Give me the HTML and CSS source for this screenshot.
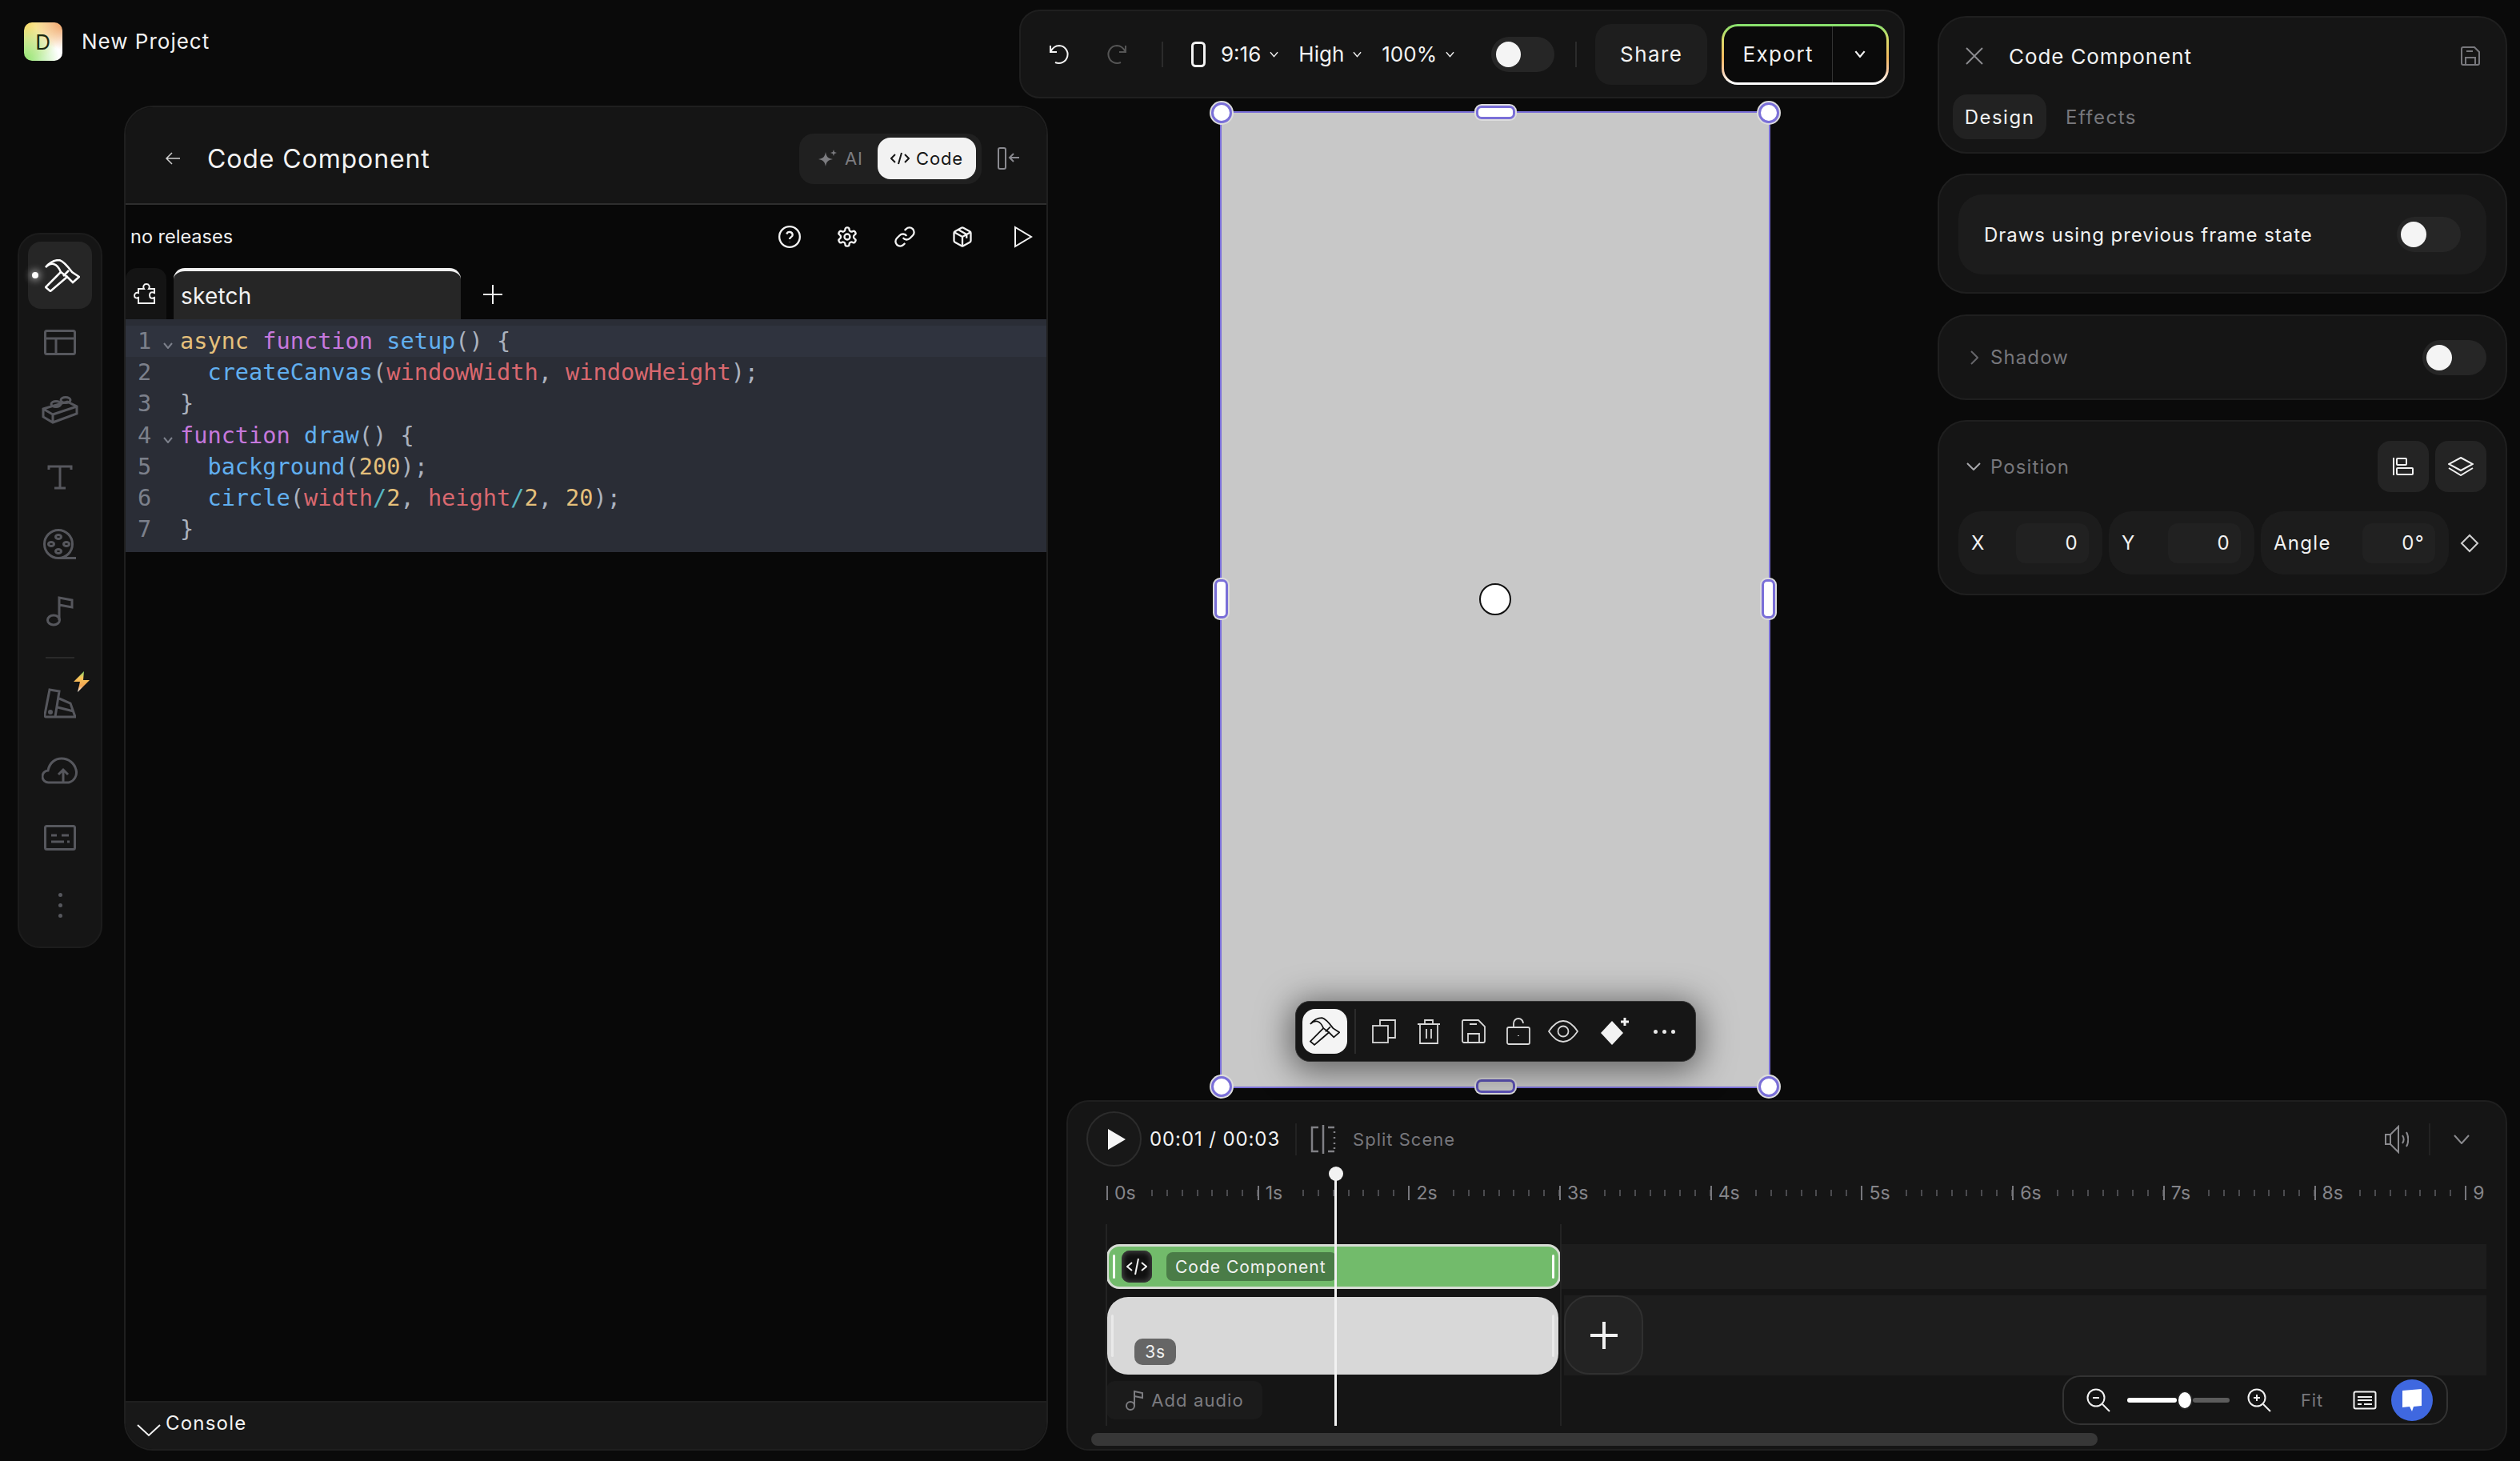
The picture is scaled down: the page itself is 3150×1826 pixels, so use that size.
FILE: index.html
```html
<!DOCTYPE html>
<html lang="en">
<head>
  <meta charset="UTF-8" />
  <title>New Project</title>
  <link rel="stylesheet" href="styles.css">
</head>
<body>
<svg class="sprite" width="0" height="0">
  <symbol id="hammer" viewBox="0 0 44 41">
    <path d="M1 10C6 4 12 1 18 1c5 1 10 7 16 15l9 6-8 7-7-7-7 6L7 40 1 35l16-16 3-3c-2-5-5-9-9-10-4-1-7 1-10 4z"/>
    <path d="M20 16l8 6M30 14l-7 7"/>
  </symbol>
  <symbol id="chev" viewBox="0 0 12 8"><path d="M1 1l5 6 5-6"/></symbol>
</svg>

<div class="app">

  <!-- Project name -->
  <div class="project">
    <div class="logo">D</div>
    <span class="project-name">New Project</span>
  </div>

  <!-- Top toolbar -->
  <div class="toolbar">
    <svg class="ico undo" width="30" height="30" viewBox="0 0 30 30"><path d="M4 4v8h8M4 12C7 6 11 4 15 4a11 11 0 1 1-5 21"/></svg>
    <svg class="ico redo" width="30" height="30" viewBox="0 0 30 30"><path d="M26 4v8h-8M26 12C23 6 19 4 15 4a11 11 0 1 0 5 21"/></svg>
    <span class="vline tb-first"></span>
    <svg class="ico phone" width="18" height="32" viewBox="0 0 18 32"><rect x="1.5" y="1.5" width="15" height="29" rx="4"/></svg>
    <span class="tb-select tb-ratio">9:16<svg class="ico" width="12" height="8"><use href="#chev"/></svg></span>
    <span class="tb-select">High<svg class="ico" width="12" height="8"><use href="#chev"/></svg></span>
    <span class="tb-select">100%<svg class="ico" width="12" height="8"><use href="#chev"/></svg></span>
    <span class="switch tb-switch"><span class="knob"></span></span>
    <span class="vline tb-second"></span>
    <button class="share">Share</button>
    <div class="export">
      <span class="export-label">Export</span>
      <span class="export-more"><svg class="ico" width="14" height="9"><use href="#chev"/></svg></span>
    </div>
  </div>

  <!-- Left tool rail -->
  <nav class="rail">
    <div class="rail-item active">
      <span class="rail-dot"></span>
      <svg class="ico rail-hammer" width="44" height="41"><use href="#hammer"/></svg>
    </div>
    <div class="rail-item"><svg class="ico" width="40" height="32" viewBox="0 0 40 32"><rect x="1.5" y="1.5" width="37" height="29" rx="2"/><path d="M1.5 11h37M15 11v19"/></svg></div>
    <div class="rail-item"><svg class="ico" width="46" height="36" viewBox="0 0 46 36"><path d="M2 17l30-9 12 6v9L14 34 2 27zM2 17l12 7v10M14 24l30-10"/><ellipse cx="18" cy="11" rx="6" ry="3.5"/><ellipse cx="30" cy="6" rx="6" ry="3.5"/></svg></div>
    <div class="rail-item"><svg class="ico" width="32" height="32" viewBox="0 0 32 32"><path d="M2 7V3h28v4M16 3v27M9 30h14"/></svg></div>
    <div class="rail-item"><svg class="ico" width="42" height="38" viewBox="0 0 42 38"><circle cx="19" cy="19" r="17.5"/><ellipse cx="19" cy="10" rx="3.5" ry="2.5"/><ellipse cx="19" cy="28" rx="3.5" ry="2.5"/><ellipse cx="10" cy="19" rx="3.5" ry="2.5"/><ellipse cx="29" cy="19" rx="3.5" ry="2.5"/><path d="M19 36.5h22"/></svg></div>
    <div class="rail-item"><svg class="ico" width="34" height="38" viewBox="0 0 34 38"><ellipse cx="9" cy="30" rx="7.5" ry="6"/><path d="M16 30V2l16 3v9l-16-3"/></svg></div>
    <div class="rail-sep"></div>
    <div class="rail-item">
      <svg class="ico" width="40" height="39" viewBox="0 0 40 39"><path d="M7 2l12 2-5 32H3a2 2 0 0 1-2-3zM19 13l14 6 6 17H14M17 24l20 5"/><circle cx="8" cy="30" r="1.5"/></svg>
      <svg class="bolt" width="20" height="26" viewBox="0 0 20 26"><defs><linearGradient id="boltfill" x1="0" y1="0" x2="0" y2="1"><stop offset="0" stop-color="#7fd66a"/><stop offset=".3" stop-color="#f7c65a"/><stop offset=".7" stop-color="#f3a452"/><stop offset="1" stop-color="#fff"/></linearGradient></defs><path d="M13 0L0 13h8l-3 13 15-15h-8z" fill="url(#boltfill)"/></svg>
    </div>
    <div class="rail-item"><svg class="ico" width="46" height="34" viewBox="0 0 46 34"><path d="M14 32H9a7.500 7.500 0 0 1-1-15C10 7 17 2 25 2c9 0 16 6 18 14 2 7-2 14-9 16h-3M12 32h22"/><path d="M27 32V17M21 22l6-6 6 6"/></svg></div>
    <div class="rail-item"><svg class="ico" width="40" height="32" viewBox="0 0 40 32"><rect x="1.500" y="1.500" width="37" height="29" rx="2"/><path d="M9 13h7M22 13h9M9 21h16M29 21h3"/></svg></div>
    <div class="rail-more"><i></i><i></i><i></i></div>
  </nav>

  <!-- Code editor panel -->
  <section class="code-panel">
    <header class="code-head">
      <svg class="ico back" width="20" height="18" viewBox="0 0 20 18"><path d="M19 9H2M9 2L2 9l7 7"/></svg>
      <h1 class="code-title">Code Component</h1>
      <div class="seg">
        <span class="seg-ai"><svg width="26" height="24" viewBox="0 0 26 24"><path class="seg-star" d="M11 4c1 6 3 8 9 9-6 1-8 3-9 9-1-6-3-8-9-9 6-1 8-3 9-9zM21 1l1 3 3 1-3 1-1 3-1-3-3-1 3-1z"/></svg>AI</span>
        <span class="seg-code"><svg class="ico" width="24" height="16" viewBox="0 0 24 16"><path d="M6 3L1 8l5 5M18 3l5 5-5 5M14 1l-4 14"/></svg>Code</span>
      </div>
      <svg class="ico collapse" width="28" height="28" viewBox="0 0 28 28"><rect x="1" y="1" width="9" height="26" rx="2"/><path d="M27 13H15M20 8l-5 5 5 5"/></svg>
    </header>
    <div class="release-bar">
      <span class="release-text">no releases</span>
      <div class="release-icons">
        <svg class="ico" width="28" height="28" viewBox="0 0 24 24"><circle cx="12" cy="12" r="11"/><path d="M8.800 9a3.300 3.300 0 0 1 6.400 1c0 2.200-3.200 2.500-3.200 4.500M12 17.800v.2"/></svg>
        <svg class="ico" width="28" height="28" viewBox="0 0 24 24"><path d="M12.220 2h-.44a2 2 0 0 0-2 2v.18a2 2 0 0 1-1 1.730l-.43.25a2 2 0 0 1-2 0l-.15-.08a2 2 0 0 0-2.730.73l-.22.38a2 2 0 0 0 .73 2.730l.15.1a2 2 0 0 1 1 1.720v.51a2 2 0 0 1-1 1.740l-.15.09a2 2 0 0 0-.73 2.730l.22.38a2 2 0 0 0 2.730.73l.15-.08a2 2 0 0 1 2 0l.43.25a2 2 0 0 1 1 1.730V20a2 2 0 0 0 2 2h.44a2 2 0 0 0 2-2v-.18a2 2 0 0 1 1-1.730l.43-.25a2 2 0 0 1 2 0l.15.08a2 2 0 0 0 2.730-.73l.22-.39a2 2 0 0 0-.73-2.730l-.15-.08a2 2 0 0 1-1-1.740v-.5a2 2 0 0 1 1-1.740l.15-.09a2 2 0 0 0 .73-2.730l-.22-.38a2 2 0 0 0-2.730-.73l-.15.08a2 2 0 0 1-2 0l-.43-.25a2 2 0 0 1-1-1.730V4a2 2 0 0 0-2-2z"/><circle cx="12" cy="12" r="3"/></svg>
        <svg class="ico" width="28" height="28" viewBox="0 0 24 24"><path d="M10 13a5 5 0 0 0 7.540.54l3-3a5 5 0 0 0-7.070-7.070l-1.720 1.710"/><path d="M14 11a5 5 0 0 0-7.540-.54l-3 3a5 5 0 0 0 7.070 7.070l1.710-1.710"/></svg>
        <svg class="ico" width="28" height="28" viewBox="0 0 24 24"><path d="M21 8a2 2 0 0 0-1-1.730l-7-4a2 2 0 0 0-2 0l-7 4A2 2 0 0 0 3 8v8a2 2 0 0 0 1 1.730l7 4a2 2 0 0 0 2 0l7-4A2 2 0 0 0 21 16Z"/><path d="M3.300 7l8.700 5 8.700-5M12 22V12M7.500 4.270l9 5.150v4"/></svg>
        <svg class="ico run" width="28" height="28" viewBox="-2 0 28 28"><path d="M2 2l20 12L2 26z"/></svg>
      </div>
    </div>
    <div class="tabs">
      <span class="tab-plugin"><svg class="ico" width="28" height="26" viewBox="0 0 28 26"><path d="M6 25h20v-7c-4 2-6 0-6-3s2-5 6-3V7h-7c2-3 0-6-3-6s-5 3-3 6H6v5c-3-1-5 1-5 3.500S3 19 6 18z"/></svg></span>
      <span class="tab-active">sketch</span>
      <svg class="ico tab-add" width="26" height="26" viewBox="0 0 26 26"><path d="M13 1v24M1 13h24"/></svg>
    </div>
    <div class="editor">
      <div class="line current"><span class="ln">1</span><span class="fold"><svg class="ico" width="12" height="8"><use href="#chev"/></svg></span><span class="c-y">async</span> <span class="c-k">function</span> <span class="c-f">setup</span><span class="c-p">() {</span></div>
      <div class="line"><span class="ln">2</span><span class="fold"></span>  <span class="c-f">createCanvas</span><span class="c-p">(</span><span class="c-v">windowWidth</span><span class="c-p">,</span> <span class="c-v">windowHeight</span><span class="c-p">);</span></div>
      <div class="line"><span class="ln">3</span><span class="fold"></span><span class="c-p">}</span></div>
      <div class="line"><span class="ln">4</span><span class="fold"><svg class="ico" width="12" height="8"><use href="#chev"/></svg></span><span class="c-k">function</span> <span class="c-f">draw</span><span class="c-p">() {</span></div>
      <div class="line"><span class="ln">5</span><span class="fold"></span>  <span class="c-f">background</span><span class="c-p">(</span><span class="c-y">200</span><span class="c-p">);</span></div>
      <div class="line"><span class="ln">6</span><span class="fold"></span>  <span class="c-f">circle</span><span class="c-p">(</span><span class="c-v">width</span><span class="c-o">/</span><span class="c-y">2</span><span class="c-p">,</span> <span class="c-v">height</span><span class="c-o">/</span><span class="c-y">2</span><span class="c-p">,</span> <span class="c-y">20</span><span class="c-p">);</span></div>
      <div class="line"><span class="ln">7</span><span class="fold"></span><span class="c-p">}</span></div>
    </div>
    <div class="code-body"></div>
    <footer class="console">
      <svg class="ico" width="30" height="17" viewBox="0 0 30 17"><path d="M1 2l14 13L29 2"/></svg>
      <span>Console</span>
    </footer>
  </section>

  <!-- Canvas -->
  <main class="stage">
    <div class="canvas">
      <span class="h-corner tl"></span><span class="h-corner tr"></span>
      <span class="h-corner bl"></span><span class="h-corner br"></span>
      <span class="h-bar top"></span><span class="h-bar bottom"></span>
      <span class="h-side left"></span><span class="h-side right"></span>
      <span class="sketch-circle"></span>
      <div class="mini-bar">
        <span class="mini-active"><svg class="ico" width="38" height="36"><use href="#hammer"/></svg></span>
        <span class="mini-sep"></span>
        <svg class="ico" width="30" height="30" viewBox="0 0 30 30"><path d="M10 8V1h19v22h-9"/><rect x="1" y="8" width="19" height="21"/></svg>
        <svg class="ico" width="30" height="32" viewBox="0 0 30 32"><path d="M1 7h28M4 7v24h22V7M10 7V2h10v5M12 13v12M18 13v12"/></svg>
        <svg class="ico" width="30" height="30" viewBox="0 0 30 30"><path d="M2 1h19l8 8v18a2 2 0 0 1-2 2H3a2 2 0 0 1-2-2V2zM8 29V18h14v11M10 6h9"/></svg>
        <svg class="ico" width="30" height="34" viewBox="0 0 30 34"><rect x="1" y="12" width="28" height="21" rx="2"/><path d="M9 12V7a6 6 0 0 1 12 0M15 22v1"/></svg>
        <svg class="ico mini-eye" width="38" height="28" viewBox="0 0 38 28"><path d="M1 14C7 5 13 1 19 1s12 4 18 13c-6 9-12 13-18 13S7 23 1 14z"/><circle cx="19" cy="14" r="6.500"/></svg>
        <svg class="mini-spark" width="36" height="34" viewBox="0 0 36 34"><path d="M14 4l14 15-14 15L0 19z"/><path d="M30 0v10M25 5h10" class="mini-plus"/></svg>
        <span class="mini-dots"><i></i><i></i><i></i></span>
      </div>
    </div>
  </main>

  <!-- Right properties -->
  <aside class="props">
    <section class="card card-title">
      <div class="title-row">
        <svg class="ico close" width="24" height="24" viewBox="0 0 24 24"><path d="M2 2l20 20M22 2L2 22"/></svg>
        <span class="title-text">Code Component</span>
        <svg class="ico save" width="24" height="24" viewBox="0 0 24 24"><path d="M3 1h14l6 6v14a2 2 0 0 1-2 2H3a2 2 0 0 1-2-2V3a2 2 0 0 1 2-2zM6 23v-9h12v9M7 6h8"/></svg>
      </div>
      <div class="prop-tabs">
        <span class="prop-tab on">Design</span>
        <span class="prop-tab">Effects</span>
      </div>
    </section>
    <section class="card card-draws">
      <div class="draws-row">
        <span>Draws using previous frame state</span>
        <span class="switch small"><span class="knob"></span></span>
      </div>
    </section>
    <section class="card card-shadow">
      <svg class="ico chev-r" width="10" height="18" viewBox="0 0 10 18"><path d="M1 1l8 8-8 8"/></svg>
      <span class="card-label">Shadow</span>
      <span class="switch small"><span class="knob"></span></span>
    </section>
    <section class="card card-position">
      <div class="pos-head">
        <svg class="ico chev-d" width="18" height="10" viewBox="0 0 18 10"><path d="M1 1l8 8 8-8"/></svg>
        <span class="card-label">Position</span>
        <span class="square-btn pos-first"><svg class="ico" width="26" height="24" viewBox="0 0 26 24"><path d="M1 1v22"/><rect x="5" y="2" width="12" height="8" rx="1"/><rect x="5" y="14" width="20" height="8" rx="1"/></svg></span>
        <span class="square-btn"><svg class="ico" width="32" height="24" viewBox="0 0 32 24"><path d="M16 1l15 8-15 8L1 9z"/><path d="M1 14l15 9 15-9"/></svg></span>
      </div>
      <div class="pos-fields">
        <div class="field f-x"><span>X</span><span class="field-val">0</span></div>
        <div class="field f-y"><span>Y</span><span class="field-val">0</span></div>
        <div class="field f-angle"><span>Angle</span><span class="field-val">0°</span></div>
        <svg class="ico keyframe" width="24" height="24" viewBox="0 0 24 24"><path d="M12 2l10 10-10 10L2 12z"/></svg>
      </div>
    </section>
  </aside>

  <!-- Timeline -->
  <section class="timeline">
    <div class="tl-head">
      <button class="tl-play"><svg width="24" height="28" viewBox="0 0 24 28"><path d="M1 1l22 13L1 27z"/></svg></button>
      <span class="tl-time">00:01 / 00:03</span>
      <span class="vline tl-sep"></span>
      <svg class="ico tl-split" width="32" height="36" viewBox="0 0 32 36"><path d="M10 3H2v30h8M16 0v36M22 3h8M22 33h8M30 8v2M30 15v2M30 22v2M30 28v2"/></svg>
      <span class="tl-split-text">Split Scene</span>
      <svg class="ico tl-vol" width="30" height="36" viewBox="0 0 30 36"><path d="M1 12v12h6l10 10V2L7 12zM7 12v12M22 13c2 3 2 7 0 10M27 9c3 5 3 13 0 18"/></svg>
      <span class="vline tl-sep2"></span>
      <svg class="ico tl-chev" width="20" height="12" viewBox="0 0 20 12"><path d="M1 1l9 10 9-10"/></svg>
    </div>
    <div class="ruler">
      <div class="sec"><span>0s</span><i></i></div>
      <div class="sec"><span>1s</span><i></i></div>
      <div class="sec"><span>2s</span><i></i></div>
      <div class="sec"><span>3s</span><i></i></div>
      <div class="sec"><span>4s</span><i></i></div>
      <div class="sec"><span>5s</span><i></i></div>
      <div class="sec"><span>6s</span><i></i></div>
      <div class="sec"><span>7s</span><i></i></div>
      <div class="sec"><span>8s</span><i></i></div>
      <div class="sec"><span>9</span></div>
    </div>
    <div class="tracks">
      <div class="track track-fx">
        <div class="clip-fx">
          <span class="grip"></span>
          <span class="clip-icon"><svg class="ico" width="26" height="22" viewBox="0 0 26 22"><path d="M7 6l-6 5 6 5M19 6l6 5-6 5M15 1l-4 20"/></svg></span>
          <span class="clip-name">Code Component</span>
          <span class="grip end"></span>
        </div>
        <div class="track-rest"></div>
      </div>
      <div class="track track-scene">
        <div class="clip-scene">
          <span class="grip pale"></span>
          <span class="clip-dur">3s</span>
          <span class="grip pale end"></span>
        </div>
        <button class="add-scene"><svg class="ico" width="38" height="38" viewBox="0 0 38 38"><path d="M19 2v34M2 19h34"/></svg></button>
        <div class="track-rest"></div>
      </div>
    </div>
    <div class="tl-foot">
      <button class="add-audio"><svg class="ico" width="24" height="26" viewBox="0 0 24 26"><ellipse cx="7" cy="20" rx="5" ry="5"/><path d="M12 20V2l10 2v6l-10-2"/></svg>Add audio</button>
      <div class="zoom-bar">
        <svg class="ico" width="30" height="30" viewBox="0 0 30 30"><circle cx="12" cy="12" r="10.500"/><path d="M20 20l9 9M8 12h8"/></svg>
        <div class="zoom-slider"><span class="zoom-fill"></span><span class="zoom-knob"></span><span class="zoom-rest"></span></div>
        <svg class="ico" width="30" height="30" viewBox="0 0 30 30"><circle cx="12" cy="12" r="10.500"/><path d="M20 20l9 9M8 12h8M12 8v8"/></svg>
        <span class="zoom-fit">Fit</span>
        <svg class="ico zoom-cap" width="30" height="24" viewBox="0 0 30 24"><rect x="1.500" y="1.500" width="27" height="21" rx="2"/><path d="M6 8h18M6 12h18M6 17h5M14 17h10"/></svg>
        <span class="chat-btn"><svg width="28" height="30" viewBox="0 0 28 30"><path d="M2 3l24-2v21l-10 1-2 6-3-6-9 1z"/></svg></span>
      </div>
    </div>
    <div class="tl-scroll"></div>
    <span class="guide g0"></span>
    <span class="guide g3"></span>
    <span class="playhead"></span>
  </section>

</div>
</body>
</html>
```

FILE: styles.css
```css
* {
  box-sizing: border-box;
}

body {
  margin: 0;
  width: 3150px;
  height: 1826px;
  overflow: hidden;
  background-color: #0a0a0a;
  color: #f2f2f2;
  font-family: Inter, 'Noto Sans', sans-serif;
  font-size: 26px;
  letter-spacing: 0.8px;
}

button {
  font: inherit;
  color: inherit;
  letter-spacing: inherit;
  border: none;
  padding: 0;
}

.sprite {
  position: absolute;
}

.ico {
  fill: none;
  stroke: currentColor;
  stroke-width: 2;
  flex: none;
}

.vline {
  width: 2px;
  background-color: #2b2b2b;
  flex: none;
}

.app {
  display: grid;
  grid-template-columns: 155px 1119px 59px 1048px 41px 728px;
  grid-template-rows: 132px 1243px 451px;
  height: 1826px;
}

/* project */
.project {
  grid-column: 1 / 3;
  grid-row: 1;
  display: flex;
  align-items: flex-start;
  padding: 28px 0 0 30px;
  gap: 24px;
}

.logo {
  width: 48px;
  height: 48px;
  border-radius: 10px;
  display: flex;
  align-items: center;
  justify-content: center;
  color: #1c2a10;
  font-size: 26px;
  background:
    radial-gradient(circle at 100% 0, #ef9f5f, transparent 50%),
    radial-gradient(circle at 0 100%, #8fe36a, transparent 65%),
    radial-gradient(circle at 0 0, #f6d85f, transparent 75%),
    #fff;
}

.project-name {
  font-size: 26px;
  line-height: 48px;
  letter-spacing: 1px;
}

/* toolbar */
.toolbar {
  grid-column: 3 / 5;
  grid-row: 1;
  margin-top: 12px;
  height: 111px;
  width: 1107px;
  background-color: #151515;
  border: 2px solid #1f1f1f;
  border-radius: 26px;
  display: flex;
  align-items: center;
  padding-left: 33px;
  z-index: 2;
}

.undo {
  color: #f2f2f2;
}

.redo {
  color: #555;
  margin-left: 42px;
}

.toolbar .vline {
  height: 32px;
}

.tb-first {
  margin-left: 41px;
}

.phone {
  margin-left: 35px;
  stroke-width: 3;
}

.tb-select {
  display: flex;
  align-items: center;
  gap: 11px;
  margin-left: 25px;
  font-size: 26px;
  letter-spacing: 0;
}

.tb-select .ico {
  width: 11px;
  stroke-width: 1.5;
}

.tb-ratio {
  margin-left: 19px;
}

.switch {
  display: flex;
  align-items: center;
  background-color: #262626;
  border-radius: 22px;
  flex: none;
}

.knob {
  border-radius: 50%;
  background-color: #f4f4f4;
}

.tb-switch {
  width: 79px;
  height: 44px;
  margin-left: 46px;
  padding-left: 6px;
}

.tb-switch .knob {
  width: 31px;
  height: 32px;
}

.tb-second {
  margin-left: 26px;
}

.share {
  margin-left: 23px;
  width: 140px;
  height: 76px;
  border-radius: 20px;
  background-color: #1e1e1e;
  font-size: 26px;
  letter-spacing: 1.400px;
}

.export {
  margin-left: 18px;
  width: 209px;
  height: 76px;
  border: 3px solid transparent;
  border-radius: 20px;
  background:
    linear-gradient(#0a0a0a, #0a0a0a) padding-box,
    linear-gradient(180deg, #84e16e, #d9dc6a 25%, #f4bb5f 55%, #f8c79c 75%, #fff 97%) border-box;
  display: flex;
  align-items: stretch;
}

.export-label {
  width: 136px;
  display: flex;
  align-items: center;
  justify-content: center;
  border-right: 1px solid #333;
  letter-spacing: 1.400px;
}

.export-more {
  flex: 1;
  display: flex;
  align-items: center;
  justify-content: center;
}

/* left rail */
.rail {
  grid-column: 1;
  grid-row: 2 / 4;
  margin: 159px 0 0 22px;
  width: 106px;
  height: 894px;
  background-color: #151515;
  border: 2px solid #1c1c1c;
  border-radius: 28px;
  padding-top: 9px;
  display: flex;
  flex-direction: column;
  align-items: center;
  color: #56575d;
}

.rail .ico {
  stroke-width: 3;
}

.rail-item {
  position: relative;
  height: 84px;
  width: 80px;
  display: flex;
  align-items: center;
  justify-content: center;
  flex: none;
}

.rail-item.active {
  background-color: #262626;
  border-radius: 16px;
  color: #fff;
}

.rail-item.active .ico {
  stroke-width: 2.500;
}

.rail-hammer {
  margin-left: 5px;
}

.rail-dot {
  position: absolute;
  left: 5px;
  top: 38px;
  width: 8px;
  height: 8px;
  border-radius: 50%;
  background-color: #fff;
  box-shadow: 0 0 8px 3px rgba(255, 255, 255, 0.45);
}

.rail-sep {
  width: 36px;
  height: 2px;
  background-color: #2a2a2a;
  margin: 15px 0 14px;
  flex: none;
}

.bolt {
  position: absolute;
  right: 3px;
  top: 2px;
}

.rail-more {
  margin-top: 27px;
  display: flex;
  flex-direction: column;
  gap: 8px;
}

.rail-more i {
  width: 5px;
  height: 5px;
  border-radius: 50%;
  background-color: #56575d;
}

/* code panel */
.code-panel {
  grid-column: 2 / 4;
  grid-row: 2 / 4;
  width: 1155px;
  height: 1681px;
  border: 2px solid #1f1f1f;
  border-radius: 36px;
  overflow: hidden;
  background-color: #080808;
  display: flex;
  flex-direction: column;
}

.code-head {
  height: 122px;
  flex: none;
  background-color: #151515;
  border-bottom: 2px solid #2e2e2e;
  display: flex;
  align-items: center;
  padding: 8px 0 0 49px;
}

.back {
  color: #cfcfcf;
  stroke-width: 1.500;
}

.code-title {
  margin: 0 0 0 33px;
  font-size: 32px;
  font-weight: 400;
  letter-spacing: 0.900px;
  flex: 1;
}

.seg {
  width: 228px;
  height: 63px;
  background-color: #202020;
  border-radius: 18px;
  display: flex;
  align-items: center;
  padding-left: 22px;
  font-size: 22px;
}

.seg-ai {
  display: flex;
  align-items: center;
  gap: 9px;
  color: #7c7c80;
  width: 76px;
}

.seg-star {
  fill: #7c7c80;
}

.seg-code {
  width: 123px;
  height: 52px;
  background-color: #f2f2f2;
  color: #161616;
  border-radius: 16px;
  display: flex;
  align-items: center;
  justify-content: center;
  gap: 8px;
}

.collapse {
  color: #8a8a90;
  margin: 0 33px 0 20px;
}

.release-bar {
  height: 79px;
  flex: none;
  display: flex;
  align-items: center;
  justify-content: space-between;
  padding: 0 15px 0 6px;
}

.release-text {
  font-size: 23.500px;
  letter-spacing: 0;
}

.release-icons {
  display: flex;
  gap: 44px;
}

.run {
  margin-left: 4px;
}

.tabs {
  height: 64px;
  flex: none;
  display: flex;
  gap: 9px;
  align-items: flex-end;
}

.tab-plugin {
  width: 51px;
  height: 64px;
  background-color: #141414;
  border-radius: 14px 14px 0 0;
  display: flex;
  align-items: center;
  justify-content: center;
  padding-right: 4px;
}

.tab-active {
  width: 359px;
  height: 64px;
  background-color: #262626;
  border-top: 4px solid #f0f0f0;
  border-radius: 14px 14px 0 0;
  padding: 14px 0 0 9px;
  font-size: 28px;
  letter-spacing: 0.200px;
}

.tab-add {
  align-self: center;
  margin: 2px 0 0 18px;
}

.editor {
  height: 291px;
  flex: none;
  background-color: #2a2d36;
  padding-top: 8px;
  font-family: 'DejaVu Sans Mono', monospace;
  font-size: 28.600px;
  letter-spacing: 0;
}

.line {
  height: 39.200px;
  line-height: 39.200px;
  white-space: pre;
}

.line.current {
  background-color: #2f333e;
}

.ln {
  display: inline-block;
  width: 47px;
  padding-left: 15px;
  color: #7c808b;
}

.fold {
  display: inline-block;
  width: 21px;
  color: #7c808b;
}

.c-y { color: #e5c07b; }
.c-k { color: #c678dd; }
.c-f { color: #61afef; }
.c-v { color: #d9686f; }
.c-p { color: #abb2bf; }
.c-o { color: #56b6c2; }

.code-body {
  flex: 1;
}

.console {
  height: 60px;
  flex: none;
  background-color: #181818;
  border-top: 2px solid #1f1f1f;
  display: flex;
  align-items: center;
  padding: 0 0 8px 14px;
  gap: 6px;
  font-size: 24px;
  letter-spacing: 1.200px;
}

.console .ico {
  margin-top: 18px;
}

/* canvas */
.stage {
  grid-column: 4;
  grid-row: 2;
  padding: 9px 0 0 194px;
}

.canvas {
  position: relative;
  width: 684px;
  height: 1217px;
  background-color: #c8c8c8;
  box-shadow: 0 0 0 2px #7a6fd8;
}

.h-corner {
  position: absolute;
  width: 26px;
  height: 26px;
  background-color: #fff;
  border: 3px solid #7a6fd8;
  border-radius: 50%;
  box-shadow: 0 0 0 2px #ddd;
}

.tl { left: -13px; top: -13px; }
.tr { right: -13px; top: -13px; }
.bl { left: -13px; bottom: -13px; }
.br { right: -13px; bottom: -13px; }

.h-bar {
  position: absolute;
  left: 318px;
  width: 49px;
  height: 17px;
  background-color: #fff;
  border: 3px solid #7a6fd8;
  border-radius: 7px;
  box-shadow: 0 0 0 2px #ddd;
}

.h-bar.top { top: -9px; }
.h-bar.bottom { bottom: -8px; background-color: #c8c8c8; border-color: #5e54b8; }

.h-side {
  position: absolute;
  top: 583px;
  width: 17px;
  height: 49px;
  background-color: #fff;
  border: 3px solid #7a6fd8;
  border-radius: 7px;
  box-shadow: 0 0 0 2px #ddd;
}

.h-side.left { left: -9px; }
.h-side.right { right: -8px; }

.sketch-circle {
  position: absolute;
  left: 322px;
  top: 588px;
  width: 40px;
  height: 40px;
  border-radius: 50%;
  background-color: #fff;
  border: 2px solid #111;
}

.mini-bar {
  position: absolute;
  left: 92px;
  top: 1110px;
  width: 501px;
  height: 76px;
  background-color: #161616;
  border: 1px solid #333;
  border-radius: 18px;
  box-shadow: 0 6px 40px 6px rgba(0, 0, 0, 0.5);
  display: flex;
  align-items: center;
  padding-left: 8px;
  color: #d8d8d8;
}

.mini-bar > .ico {
  margin-left: 26px;
  stroke-width: 1.800;
}

.mini-bar > .ico:nth-of-type(1) {
  margin-left: 20px;
}

.mini-bar > .mini-eye {
  margin-left: 22px;
}

.mini-active {
  width: 56px;
  height: 56px;
  border-radius: 16px;
  background-color: #f4f4f4;
  color: #111;
  display: flex;
  align-items: center;
  justify-content: center;
}

.mini-sep {
  width: 2px;
  height: 56px;
  background-color: #2b2b2b;
  margin-left: 9px;
}

.mini-spark {
  margin-left: 28px;
  fill: #f2f2f2;
}

.mini-plus {
  fill: none;
  stroke: #f2f2f2;
  stroke-width: 3;
}

.mini-dots {
  display: flex;
  gap: 6px;
  margin-left: 30px;
}

.mini-dots i {
  width: 5px;
  height: 5px;
  border-radius: 50%;
  background-color: #e8e8e8;
}

/* properties */
.props {
  grid-column: 6;
  grid-row: 1 / 3;
  width: 712px;
  padding-top: 20px;
  display: flex;
  flex-direction: column;
  gap: 25px;
}

.card {
  background-color: #151515;
  border: 2px solid #1f1f1f;
  border-radius: 36px;
  flex: none;
}

.card-title {
  height: 172px;
  padding: 0 17px;
}

.title-row {
  display: flex;
  align-items: center;
  height: 96px;
  padding-left: 15px;
}

.close {
  color: #8b8b8f;
}

.title-text {
  margin-left: 31px;
  flex: 1;
  font-size: 26px;
  letter-spacing: 0.900px;
}

.save {
  color: #77777c;
  margin-right: 15px;
}

.prop-tabs {
  display: flex;
  gap: 24px;
  align-items: center;
}

.prop-tab {
  height: 56px;
  display: flex;
  align-items: center;
  color: #77777c;
  font-size: 24px;
  letter-spacing: 1.500px;
}

.prop-tab.on {
  width: 117px;
  justify-content: center;
  background-color: #222;
  border-radius: 18px;
  color: #f2f2f2;
}

.card-draws {
  height: 150px;
  padding: 24px;
}

.draws-row {
  height: 100px;
  background-color: #1c1c1c;
  border-radius: 30px;
  display: flex;
  align-items: center;
  justify-content: space-between;
  padding: 0 32px;
  font-size: 24px;
  letter-spacing: 0.950px;
}

.switch.small {
  width: 80px;
  height: 44px;
  padding-left: 5px;
}

.switch.small .knob {
  width: 32px;
  height: 32px;
}

.card-shadow {
  height: 107px;
  margin-top: 1px;
  display: flex;
  align-items: center;
  padding: 0 24px 0 39px;
}

.chev-r {
  color: #66666a;
}

.card-label {
  margin-left: 15px;
  color: #77777c;
  font-size: 24px;
  letter-spacing: 1.100px;
}

.card-shadow .switch {
  margin-left: auto;
}

.card-position {
  height: 219px;
  padding: 24px;
}

.pos-head {
  display: flex;
  align-items: center;
  height: 64px;
  padding-left: 10px;
  margin-bottom: 24px;
}

.chev-d {
  color: #a8a8ac;
}

.card-position .card-label {
  margin-left: 12px;
}

.square-btn {
  width: 64px;
  height: 64px;
  border-radius: 16px;
  background-color: #242424;
  display: flex;
  align-items: center;
  justify-content: center;
  margin-left: 8px;
}

.pos-first {
  margin-left: auto;
}

.pos-fields {
  display: flex;
  align-items: center;
  gap: 8px;
  font-size: 24px;
  letter-spacing: 1.300px;
}

.field {
  height: 79px;
  background-color: #1c1c1c;
  border-radius: 28px;
  display: flex;
  align-items: center;
  justify-content: space-between;
  padding: 0 17px 0 16px;
}

.f-x { width: 180px; }
.f-y { width: 182px; }
.f-angle { width: 235px; }

.field-val {
  width: 91px;
  height: 50px;
  background-color: #212121;
  border-radius: 12px;
  display: flex;
  align-items: center;
  justify-content: flex-end;
  padding-right: 13px;
}

.keyframe {
  margin-left: 6px;
  color: #d0d0d0;
}

/* timeline */
.timeline {
  grid-column: 4 / 7;
  grid-row: 3;
  position: relative;
  width: 1801px;
  height: 438px;
  background-color: #151515;
  border: 2px solid #1f1f1f;
  border-radius: 28px;
}

.tl-head {
  margin-top: 12px;
  height: 69px;
  display: flex;
  align-items: center;
  padding-left: 23px;
  font-size: 24px;
}

.tl-play {
  width: 69px;
  height: 69px;
  border-radius: 50%;
  background-color: #181818;
  border: 2px solid #2c2c2c;
  display: flex;
  align-items: center;
  justify-content: center;
  flex: none;
  padding-left: 6px;
}

.tl-play path {
  fill: #f4f4f4;
}

.tl-time {
  margin-left: 10px;
  letter-spacing: 0.900px;
}

.tl-head .vline {
  height: 40px;
  background-color: #222;
}

.tl-sep {
  margin-left: 19px;
}

.tl-split {
  margin-left: 17px;
  color: #808085;
  stroke-width: 2.500;
}

.tl-split-text {
  margin-left: 21px;
  color: #77777c;
  font-size: 22px;
  letter-spacing: 1px;
}

.tl-vol {
  margin-left: auto;
  color: #8a8a8e;
}

.tl-sep2 {
  margin-left: 25px;
}

.tl-chev {
  margin: 0 45px 0 29px;
  color: #8a8a8e;
}

.ruler {
  margin: 18px 0 0 48px;
  width: 1725px;
  height: 30px;
  display: flex;
  overflow: hidden;
  color: #85858a;
  font-size: 23px;
  letter-spacing: 0;
}

.sec {
  width: 188.700px;
  flex: none;
  position: relative;
  display: flex;
  align-items: center;
  border-left: 2px solid #77777c;
  padding-left: 8px;
  height: 18px;
  margin-top: 6px;
}

.sec i {
  position: absolute;
  left: 54px;
  top: 5px;
  width: 133px;
  height: 8px;
  background: repeating-linear-gradient(90deg, #4a4a4e 0 2px, transparent 2px 18.870px);
}

.tracks {
  margin: 49px 0 0 48px;
  width: 1725px;
  display: flex;
  flex-direction: column;
  gap: 8px;
}

.track {
  display: flex;
}

.track-fx {
  height: 56px;
}

.track-scene {
  height: 100px;
}

.track-rest {
  flex: 1;
  background-color: #1d1d1d;
}

.track-scene .track-rest {
  margin-left: -99px;
}

.clip-fx {
  position: relative;
  width: 568px;
  background-color: #72bb6b;
  border: 3px solid #d7dcd5;
  border-radius: 16px;
  display: flex;
  align-items: center;
  flex: none;
}

.grip {
  position: absolute;
  left: 5px;
  top: 10px;
  bottom: 10px;
  width: 3px;
  border-radius: 2px;
  background-color: #fff;
}

.grip.end {
  left: auto;
  right: 5px;
}

.clip-icon {
  width: 38px;
  height: 40px;
  margin-left: 16px;
  background-color: #111;
  border-radius: 10px;
  box-shadow: inset 0 0 6px 2px #444;
  display: flex;
  align-items: center;
  justify-content: center;
}

.clip-name {
  margin-left: 18px;
  width: 213px;
  height: 36px;
  background-color: #4a7c47;
  border-radius: 8px;
  display: flex;
  align-items: center;
  padding-left: 11px;
  font-size: 21px;
  letter-spacing: 1px;
}

.clip-scene {
  position: relative;
  width: 564px;
  height: 97px;
  margin: 2px 0 0 1px;
  background-color: #d8d8d8;
  border-radius: 26px;
  flex: none;
  z-index: 1;
}

.grip.pale {
  top: 22px;
  bottom: 22px;
  left: 5px;
  background-color: #e9e9e9;
}

.grip.pale.end {
  left: auto;
  right: 5px;
}

.clip-dur {
  position: absolute;
  left: 34px;
  top: 52px;
  width: 52px;
  height: 33px;
  background-color: #666;
  border-radius: 10px;
  display: flex;
  align-items: center;
  justify-content: center;
  font-size: 21px;
  color: #f0f0f0;
}

.add-scene {
  width: 99px;
  height: 99px;
  margin-left: 7px;
  border-radius: 32px;
  background-color: #232323;
  border: 2px solid #303030;
  display: flex;
  align-items: center;
  justify-content: center;
  flex: none;
  z-index: 1;
}

.add-scene .ico {
  stroke-width: 4;
}

.tl-foot {
  margin: 0 0 0 48px;
  width: 1725px;
  height: 62px;
  display: flex;
  align-items: center;
  justify-content: space-between;
}

.add-audio {
  width: 195px;
  height: 48px;
  border-radius: 10px;
  background-color: #1b1b1b;
  color: #7c7c80;
  display: flex;
  align-items: center;
  justify-content: center;
  gap: 9px;
  font-size: 22px;
  letter-spacing: 1.100px;
}

.zoom-bar {
  width: 482px;
  height: 62px;
  margin-right: 48px;
  background-color: #151515;
  border: 2px solid #333;
  border-radius: 22px;
  display: flex;
  align-items: center;
  padding-left: 28px;
  position: relative;
  z-index: 1;
}

.zoom-slider {
  width: 128px;
  margin-left: 21px;
  display: flex;
  align-items: center;
  position: relative;
}

.zoom-fill {
  width: 62px;
  height: 6px;
  border-radius: 3px;
  background-color: #fff;
}

.zoom-knob {
  width: 16px;
  height: 20px;
  margin: 0 2px;
  border-radius: 50%;
  background-color: #fff;
  box-shadow: 0 0 0 2px #222;
}

.zoom-rest {
  flex: 1;
  height: 6px;
  border-radius: 3px;
  background-color: #5c5c5c;
}

.zoom-slider + .ico {
  margin-left: 22px;
}

.zoom-fit {
  margin-left: 37px;
  color: #77777c;
  font-size: 22px;
}

.zoom-cap {
  margin-left: 37px;
}

.chat-btn {
  margin-left: 18px;
  width: 52px;
  height: 52px;
  border-radius: 50%;
  background-color: #3f68e0;
  display: flex;
  align-items: center;
  justify-content: center;
}

.chat-btn path {
  fill: #fff;
}

.tl-scroll {
  margin: 10px 0 0 29px;
  width: 1258px;
  height: 16px;
  border-radius: 8px;
  background-color: #373737;
}

.guide {
  position: absolute;
  top: 153px;
  height: 252px;
  width: 2px;
  background-color: #232323;
}

.g0 { left: 47px; }
.g3 { left: 615px; }

.playhead {
  position: absolute;
  left: 333px;
  top: 91px;
  height: 314px;
  width: 3px;
  background-color: #f2f2f2;
  z-index: 3;
}

.playhead::before {
  content: '';
  position: absolute;
  left: -7px;
  top: -10px;
  width: 18px;
  height: 18px;
  border-radius: 50%;
  background-color: #f2f2f2;
}
```
